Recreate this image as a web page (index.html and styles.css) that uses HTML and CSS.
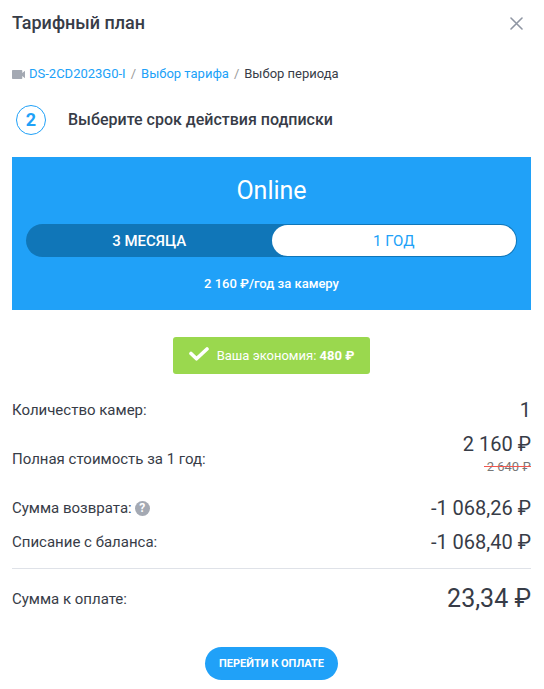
FILE: index.html
```html
<!DOCTYPE html>
<html lang="ru">
<head>
  <meta charset="UTF-8">
  <meta name="viewport" content="width=device-width, initial-scale=1.0">
  <title>Тарифный план</title>
  <link rel="stylesheet" href="styles.css">
</head>
<body>
  <header class="modal-header">
    <h1 class="modal-title">Тарифный план</h1>
    <button type="button" class="close-btn" aria-label="Закрыть">
      <svg width="13" height="13" viewBox="0 0 13 13" fill="none" stroke="#8f96a3" stroke-width="1.6" stroke-linecap="round">
        <path d="M1 1l11 11M12 1L1 12"/>
      </svg>
    </button>
  </header>

  <main>
    <nav class="breadcrumbs">
      <svg class="camera-icon" width="13" height="9" viewBox="0 0 13 9" fill="#a4a9b3">
        <path d="M.8 0h8.700a.8.8 0 0 1 .8.8V3L13 .8v7.400L10.300 6v2.200a.8.8 0 0 1-.8.8H.8a.8.8 0 0 1-.8-.8V.8A.8.8 0 0 1 .8 0z"/>
      </svg>
      <a href="#">DS-2CD2023G0-I</a>
      <span class="separator">/</span>
      <a href="#">Выбор тарифа</a>
      <span class="separator">/</span>
      <span>Выбор периода</span>
    </nav>

    <div class="step">
      <span class="step-number">2</span>
      <h2 class="step-title">Выберите срок действия подписки</h2>
    </div>

    <section class="plan">
      <h3 class="plan-name">Online</h3>
      <div class="period-switch">
        <button type="button" class="period" aria-pressed="false">3 МЕСЯЦА</button>
        <button type="button" class="period active" aria-pressed="true">1 ГОД</button>
      </div>
      <p class="plan-price">2 160 ₽/год за камеру</p>
    </section>

    <div class="saving">
      <svg class="check-icon" width="20" height="14" viewBox="0 0 20 14" fill="none" stroke="#fff" stroke-width="3.600" stroke-linecap="round" stroke-linejoin="round">
        <path d="M2 6.500l5.500 5.300L18 2"/>
      </svg>
      <span>Ваша экономия: <b>480 ₽</b></span>
    </div>

    <dl class="summary">
      <div class="row">
        <dt>Количество камер:</dt>
        <dd>1</dd>
      </div>
      <div class="row row-price">
        <dt>Полная стоимость за 1 год:</dt>
        <dd>2 160 ₽<del class="old-price">2 640 ₽</del></dd>
      </div>
      <div class="row">
        <dt>Сумма возврата:<button type="button" class="help" aria-label="Подсказка">?</button></dt>
        <dd>-1 068,26 ₽</dd>
      </div>
      <div class="row">
        <dt>Списание с баланса:</dt>
        <dd>-1 068,40 ₽</dd>
      </div>
      <div class="row total">
        <dt>Сумма к оплате:</dt>
        <dd>23,34 ₽</dd>
      </div>
    </dl>

    <button type="button" class="pay-btn">ПЕРЕЙТИ К ОПЛАТЕ</button>
  </main>
</body>
</html>
```

FILE: styles.css
```css
* {
  box-sizing: border-box;
}

body {
  font-family: Roboto, "Liberation Sans", sans-serif;
  font-size: 13px;
  line-height: 20px;
  color: #373c47;
  margin: 0;
  padding: 13px 13px 8px 12px;
  background-color: #fff;
}

h1, h2, h3, p, dl, dd {
  margin: 0;
  font-weight: 400;
}

button {
  font-family: inherit;
  border: 0;
  padding: 0;
  cursor: pointer;
}

a {
  color: #20a1f8;
  text-decoration: none;
}

main {
  display: flex;
  flex-direction: column;
}

.modal-header {
  display: flex;
  justify-content: space-between;
  align-items: center;
  margin-bottom: 31px;
}

.modal-title {
  font-size: 18px;
  font-weight: 500;
}

.close-btn {
  display: flex;
  padding: 0 8px;
  background: none;
}

.breadcrumbs {
  display: flex;
  align-items: center;
  gap: 5px;
  margin-bottom: 21px;
}

.camera-icon {
  margin-right: -1px;
}

.separator {
  color: #999;
}

.step {
  display: flex;
  align-items: center;
  gap: 22px;
  padding-left: 4px;
  margin-bottom: 22px;
}

.step-number {
  width: 30px;
  height: 30px;
  border: 1px solid #20a1f8;
  border-radius: 50%;
  color: #20a1f8;
  font-size: 18px;
  font-weight: 700;
  line-height: 28px;
  text-align: center;
}

.step-title {
  font-size: 16px;
  font-weight: 500;
}

.plan {
  padding: 18px 14px 16px;
  background-color: #20a1f8;
  color: #fff;
  text-align: center;
}

.plan-name {
  font-size: 25px;
  line-height: 32px;
  margin-bottom: 17px;
}

.period-switch {
  display: flex;
  padding: 1px;
  border-radius: 17px;
  background-color: #1076b8;
}

.period {
  flex: 1;
  height: 31px;
  border-radius: 16px;
  background: none;
  color: #fff;
  font-size: 15px;
  font-weight: 500;
}

.period.active {
  background-color: #fff;
  color: #20a1f8;
  font-weight: 400;
}

.plan-price {
  margin-top: 17px;
  font-weight: 500;
}

.saving {
  display: flex;
  align-items: center;
  align-self: center;
  gap: 8px;
  height: 37px;
  margin: 27px 0 24px;
  padding: 0 16px;
  border-radius: 3px;
  background-color: #9ad84e;
  color: #fff;
}

.saving b {
  font-weight: 700;
}

.check-icon {
  margin-bottom: 3px;
}

.summary {
  font-size: 15px;
}

.row {
  display: flex;
  justify-content: space-between;
  align-items: center;
  min-height: 24px;
  margin-bottom: 10px;
}

.row dt {
  display: flex;
  align-items: center;
  gap: 3px;
}

.row dd {
  font-size: 20px;
  line-height: 24px;
  text-align: right;
}

.row-price dd {
  display: flex;
  flex-direction: column;
  align-items: flex-end;
  padding-bottom: 8px;
}

.old-price {
  position: relative;
  padding-left: 3px;
  color: #777;
  font-size: 13px;
  line-height: 22px;
  text-decoration: none;
}

/* red line over the old price */
.old-price::after {
  content: "";
  position: absolute;
  top: 10px;
  left: 0;
  right: 0;
  height: 1px;
  background-color: #f0564f;
}

.help {
  width: 15px;
  height: 15px;
  border-radius: 50%;
  background-color: #a4a9b3;
  color: #fff;
  font-size: 12px;
  font-weight: 700;
  line-height: 15px;
}

.total {
  margin: 14px 0 32px;
  padding-top: 14px;
  border-top: 1px solid #dfe2e8;
}

.total dd {
  font-size: 25px;
  line-height: 32px;
}

.pay-btn {
  align-self: center;
  height: 33px;
  padding: 0 14px;
  border-radius: 17px;
  background-color: #20a1f8;
  color: #fff;
  font-size: 11px;
  font-weight: 700;
}
```
